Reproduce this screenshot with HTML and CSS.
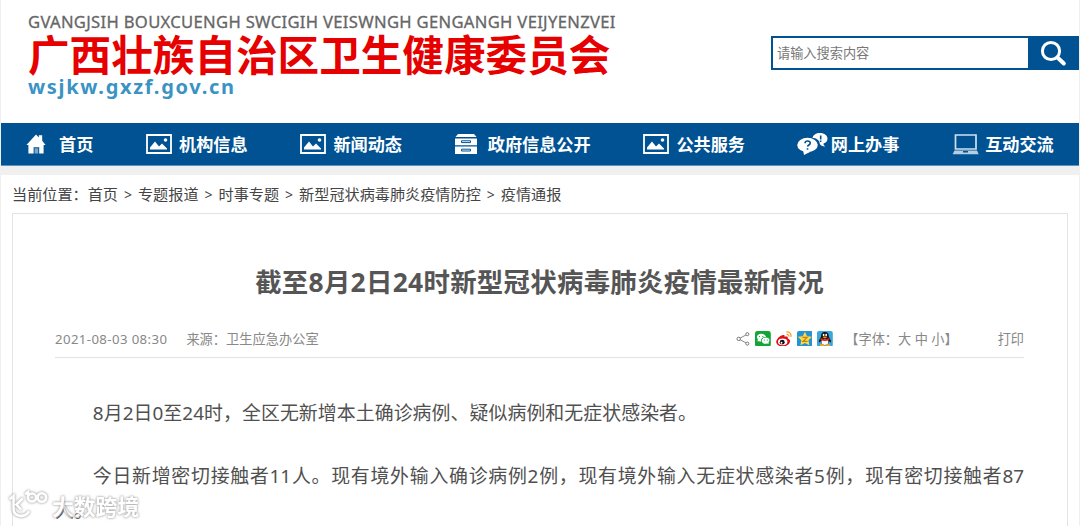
FILE: index.html
```html
<!DOCTYPE html>
<html lang="zh-CN">
<head>
	<meta charset="utf-8">
	<title>截至8月2日24时新型冠状病毒肺炎疫情最新情况</title>
	<link rel="stylesheet" href="styles.css">
</head>
<body>
<svg class="defs">
	<symbol id="pic" viewBox="0 0 26 20">
		<path d="M1 1h24v18H1z" fill="none" stroke="#fff" stroke-width="1.8"/>
		<path d="M4 15.5v-2l5-6 4 5 3-3 5 5v1z" fill="#fff"/>
		<circle cx="19.5" cy="6" r="1.8" fill="#fff"/>
	</symbol>
</svg>
<div class="wrap">
	<div class="header">
		<div class="logo">
			<div class="logo-za">GVANGJSIH BOUXCUENGH SWCIGIH VEISWNGH GENGANGH VEIJYENZVEI</div>
			<div class="logo-cn">广西壮族自治区卫生健康委员会</div>
			<div class="logo-url">wsjkw.gxzf.gov.cn</div>
		</div>
		<form class="search">
			<input type="text" placeholder="请输入搜索内容">
			<button type="button">
				<svg width="27" height="27" viewBox="0 0 27 27"><circle cx="11" cy="11" r="8.6" fill="none" stroke="#fff" stroke-width="3"/><path d="M17.5 17.5l6.3 6" stroke="#fff" stroke-width="4" stroke-linecap="round"/></svg>
			</button>
		</form>
	</div>
	<div class="nav">
		<a><i><svg width="20" height="20" viewBox="0 0 20 20"><path d="M10 .5l2.8 3V1.2h3.4v5.6L19.6 11h-2v8.5h-4.4v-6.2H7.6v6.2H2.4V11H.4z" fill="#fff"/><path d="M8.6 14.3h3.6v5.2H8.6z" fill="#7fa6c9"/></svg></i>首页</a>
		<a><i><svg width="26" height="20"><use href="#pic"/></svg></i>机构信息</a>
		<a><i><svg width="26" height="20"><use href="#pic"/></svg></i>新闻动态</a>
		<a><i><svg width="24" height="20" viewBox="0 0 24 20"><path d="M4 0h16l2.5 3h-21z" fill="#fff"/><path d="M1 4.4h22v6.8H1zM1 12.4h22V20H1z" fill="#fff"/><path d="M7.5 6.8h9v1.800h-9zM7.5 15.200h9V17h-9z" fill="none" stroke="#005293" stroke-width="1"/></svg></i>政府信息公开</a>
		<a><i><svg width="26" height="20"><use href="#pic"/></svg></i>公共服务</a>
		<a><i><svg width="31" height="22" viewBox="0 0 31 22"><path d="M15.5 5C16 2 19 0 23 0c4.5 0 7.5 2.5 7.5 5.5 0 2.5-1.5 4.3-4 5.1 0 1.400.6 2.200 1.700 2.900-2.700 0-4.600-1-5.400-2.700C22.500 7 19 5 15.500 5z" fill="#fff"/><ellipse cx="10.5" cy="12" rx="10.3" ry="7.2" fill="#fff"/><path d="M6 17l1 5 6-3z" fill="#fff"/><path d="M8 10.200c.2-3.200 5.600-2.800 5.200.1-.3 1.700-2.500 1.700-2.600 3.300M10.500 15.200v1.600M23.700 2.500v4M23.600 7.600v1.300" fill="none" stroke="#005293" stroke-width="1.6"/></svg></i>网上办事</a>
		<a><i><svg width="27" height="21" viewBox="0 0 27 21"><path d="M3.5 1h20.500v14H3.500z" fill="none" stroke="#cfe0ee" stroke-width="1.7"/><path d="M2.5 16.500h22.500l1.700 3.800H.6z" fill="#b5cee3"/><path d="M11 17h5v1.500h-5z" fill="#005293"/></svg></i>互动交流</a>
	</div>
	<div class="position">当前位置：<a>首页</a><span>&gt;</span><a>专题报道</a><span>&gt;</span><a>时事专题</a><span>&gt;</span><a>新型冠状病毒肺炎疫情防控</a><span>&gt;</span><a>疫情通报</a></div>
	<div class="article">
		<h1>截至8月2日24时新型冠状病毒肺炎疫情最新情况</h1>
		<div class="info">
			<span class="date">2021-08-03 08:30</span>
			<span class="source">来源：卫生应急办公室</span>
			<div class="share">
				<svg viewBox="0 0 16 16"><path d="M12.5 2.800L3 8l9.500 5.200" fill="none" stroke="#888" stroke-width="1.1"/><g fill="#fff" stroke="#777" stroke-width="1.1"><circle cx="12.5" cy="2.8" r="1.7"/><circle cx="3" cy="8" r="1.9"/><circle cx="12.5" cy="13.2" r="1.7"/></g></svg>
				<svg viewBox="0 0 16 16"><rect width="16" height="16" rx="2.5" fill="#12a537"/><path d="M2.500 10.300l.4-2C.5 5.500 3 2.700 6.300 2.700c2.700 0 4.600 1.600 4.800 3.500-3.500-.2-5.700 2-4.900 4.400-.8 0-1.300-.1-1.900-.3z" fill="#fff"/><path d="M14 12.900l-.3-1.500c2.200-2.300.3-4.700-2.700-4.700-2.500 0-4.200 1.500-4.200 3.200 0 2.100 2.400 3.500 5.200 2.800z" fill="#fff"/><path d="M4 5.600h1M7.400 5.600h1M9 9.200h1M12 9.200h1" stroke="#12a537"/></svg>
				<svg viewBox="0 0 16 16"><path d="M6.500 4.200c1.600-.7 2.600 0 2.200 1.600 2.300-.8 3.700-.2 3.200 1.700 5 1.800 1.500 8.200-5 8.200C3 15.700.2 13.700.2 11c0-2.800 4-6.700 6.300-6.800z" fill="#e10b15"/><ellipse cx="6.8" cy="11" rx="4.8" ry="3.4" fill="#fff"/><circle cx="6.3" cy="11.3" r="2.5" fill="#111"/><circle cx="5.6" cy="11.9" r=".9" fill="#fff"/><path d="M10.500 1c3-.5 5.400 2 4.500 5M10.600 3.500c1.700-.3 2.700.8 2.400 2.300" fill="none" stroke="#f6a02c" stroke-width="1.3"/></svg>
				<svg viewBox="0 0 16 16"><rect width="16" height="16" rx="2" fill="#2493d2"/><path d="M8 .8l2.200 4.400 5 .7-3.600 3.500.9 5L8 12.200l-4.500 2.200.9-5L.8 5.900l5-.7z" fill="#ffd84a"/><path d="M5.500 6.500h4.700L6 10.600h4.700" fill="none" stroke="#c98200" stroke-width="1.2"/></svg>
				<svg viewBox="0 0 16 16"><rect width="16" height="16" rx="2" fill="#36a8df"/><path d="M8 1C5 1 3.900 3 4 6c-1.500 2-2.500 4-2 5.500.5.500 1.200-.5 1.600-1 .2 2 2 3.500 4.400 3.500s4.200-1.500 4.400-3.500c.4.500 1.100 1.500 1.600 1 .5-1.500-.5-3.500-2-5.500.1-3-1-5-4-5z" fill="#151515"/><ellipse cx="8" cy="11" rx="3.5" ry="3.2" fill="#fff"/><path d="M3.500 7.200c3 1.500 6 1.500 9 0v2c-3 1.300-6 1.300-9 0z" fill="#e5201b"/><ellipse cx="6.7" cy="4" rx=".9" ry="1.2" fill="#fff"/><ellipse cx="9.3" cy="4" rx=".9" ry="1.2" fill="#fff"/><path d="M5.300 6.200c2-1 3.500-1 5.400 0-2 1.200-3.500 1.200-5.400 0z" fill="#f8a51b"/><path d="M3 14.300h4.200M8.800 14.300H13" stroke="#f8a51b" stroke-width="1.7"/></svg>
			</div>
			<span class="size">【字体：大 中 小】</span>
			<span class="print">打印</span>
		</div>
		<div class="content">
			<p>8月2日0至24时，全区无新增本土确诊病例、疑似病例和无症状感染者。</p>
			<p>今日新增密切接触者11人。现有境外输入确诊病例2例，现有境外输入无症状感染者5例，现有密切接触者87人。</p>
		</div>
	</div>
</div>
<div class="mark">
	<svg width="40" height="30" viewBox="0 0 40 30"><path d="M1.500 8.500L4.500 6v13c0 8 11 9 15 3M13 9l-5.500 5.500 4 4.500M17 3.500l2-1.500v6M19 7.500a4 4 0 1 0 8 0 4 4 0 1 0-8 0M28.500 7.500a4.300 4.300 0 1 0 8.600 0 4.300 4.300 0 1 0-8.600 0" fill="none" stroke="#fff" stroke-width="2.6" stroke-linecap="round"/></svg>
	<span>大数跨境</span>
</div>
</body>
</html>
```

FILE: styles.css
```css
*{
	margin:0;
	padding:0;
	box-sizing:border-box;
}
body{
	height:526px;
	overflow:hidden;
	background:#f0f0f0;
	font-family:"Noto Sans","Noto Sans CJK SC",sans-serif;
	color:#444;
}
.defs{
	display:none;
}
.wrap{
	margin:0 1px;
	height:526px;
	overflow:hidden;
	background:#fff;
}
.header{
	height:123px;
	display:flex;
	justify-content:space-between;
	white-space:nowrap;
}
.logo{
	padding:10px 0 0 27px;
}
.logo-za{
	font-size:16.6px;
	line-height:23px;
	letter-spacing:.32px;
	color:#666;
	-webkit-text-stroke:.3px #666;
}
.logo-cn{
	font:bold 41.6px/41px "Noto Sans CJK SC",sans-serif;
	color:#e60000;
}
.logo-url{
	font-size:20px;
	font-weight:bold;
	line-height:26px;
	letter-spacing:1.7px;
	color:#3a93c3;
}
.search{
	display:flex;
	width:308px;
	height:34px;
	margin-top:36px;
}
.search input{
	width:257px;
	border:2px solid #005293;
	border-right:0;
	padding:0 4px 2px;
	font:13.2px "Noto Sans CJK SC",sans-serif;
}
.search input::placeholder{
	color:#777;
}
.search button{
	flex:1;
	border:0;
	background:#005293;
}
.search button svg{
	display:block;
	margin:0 auto;
}
.nav{
	display:flex;
	height:43px;
	padding-left:24.5px;
	background:#005293;
	border-bottom:1px solid #5f93bd;
	color:#fff;
	font:bold 17.15px/42px "Noto Sans CJK SC",sans-serif;
	white-space:nowrap;
}
.nav a{
	display:flex;
	align-items:center;
	margin-right:52.3px;
}
.nav i{
	display:flex;
	width:33.5px;
}
.position{
	border-top:9px solid #f0f0f0;
	height:47px;
	padding-left:11px;
	font-size:15.15px;
	line-height:38px;
	white-space:nowrap;
}
.position span{
	display:inline-block;
	width:20px;
	text-align:center;
	font-size:14px;
}
.article{
	margin:0 11px;
	height:340px;
	border:1px solid #e3e3e3;
	padding:0 43px 0 42px;
}
h1{
	padding-top:48px;
	font-size:26.4px;
	letter-spacing:.3px;
	line-height:40px;
	text-align:center;
	color:#555;
	white-space:nowrap;
}
.info{
	display:flex;
	align-items:center;
	height:38px;
	margin-top:18px;
	border-bottom:1px solid #e3e3e3;
	font-size:13.2px;
	color:#888;
	white-space:nowrap;
}
.date{
	margin-right:19px;
	letter-spacing:.4px;
}
.source{
	letter-spacing:.05px;
}
.share{
	display:flex;
	gap:5px;
	margin-left:auto;
}
.share svg{
	width:15.8px;
	height:15.8px;
}
.share svg:first-child{
	width:14.5px;
}
.size{
	margin:0 40px 0 12px;
}
.content{
	padding-top:38px;
	font-size:18.9px;
	line-height:35px;
	color:#505050;
	text-align:justify;
}
.content p{
	text-indent:2em;
	margin-bottom:28px;
}
.content p:first-child{
	letter-spacing:.07px;
}
/* watermark */
.mark{
	position:absolute;
	left:9px;
	top:490px;
	display:flex;
	opacity:.7;
	filter:drop-shadow(0 0 1px #888) drop-shadow(0 0 1px #bbb);
	color:#fff;
	font:bold 21.8px/32px "Noto Sans CJK SC",sans-serif;
}
.mark span{
	margin-left:3px;
}
```
